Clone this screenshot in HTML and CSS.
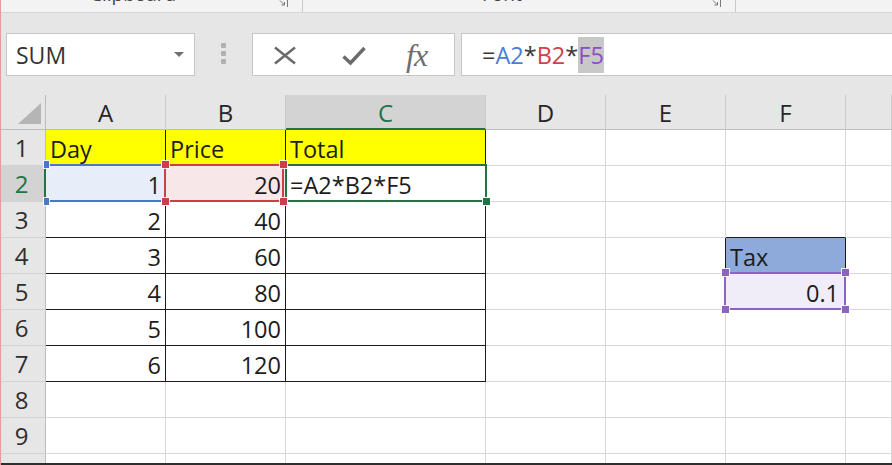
FILE: index.html
```html
<!DOCTYPE html>
<html>
<head>
<meta charset="utf-8">
<title>Sheet</title>
<link rel="stylesheet" href="styles.css">
</head>
<body>
<div class="app">
  <div class="ribbon">
    <div class="rgroup g1">
      <span class="rlabel">Clipboard</span>
      <svg class="launch" width="10" height="8" viewBox="0 0 10 8"><path d="M1 0.5 L5.5 5 M5.5 2 V5 H2.5 M8.5 0 V7" fill="none" stroke="#7a7a7a" stroke-width="1"/></svg>
    </div>
    <div class="rgroup g2">
      <span class="rlabel">Font</span>
      <svg class="launch" width="10" height="8" viewBox="0 0 10 8"><path d="M1 0.5 L5.5 5 M5.5 2 V5 H2.5 M8.5 0 V7" fill="none" stroke="#7a7a7a" stroke-width="1"/></svg>
    </div>
  </div>

  <div class="fbar">
    <div class="namebox">
      <span class="nb-text">SUM</span>
      <span class="nb-caret"></span>
    </div>
    <div class="grip"><i></i><i></i><i></i></div>
    <div class="fbtns">
      <svg class="ic-x" width="24" height="19" viewBox="0 0 24 19"><path d="M2 1.5 L22 17.5 M22 1.5 L2 17.5" stroke="#6b6b6b" stroke-width="2.6" fill="none"/></svg>
      <svg class="ic-ok" width="24" height="20" viewBox="0 0 24 20"><path d="M1.5 10.5 L8.5 17 L22.5 2" stroke="#6b6b6b" stroke-width="3.4" fill="none"/></svg>
      <span class="ic-fx">fx</span>
    </div>
    <div class="formula"><span class="f-op">=</span><span class="r-a">A2</span><span class="f-op">*</span><span class="r-b">B2</span><span class="f-op">*</span><span class="r-f">F5</span></div>
  </div>

  <div class="sheet">
    <!-- header row -->
    <div class="corner"><svg width="44" height="34" viewBox="0 0 44 34"><polygon points="40,8 40,29 17,29" fill="#b5b5b5"/></svg></div>
    <div class="ch">A</div>
    <div class="ch">B</div>
    <div class="ch ch-sel">C</div>
    <div class="ch">D</div>
    <div class="ch">E</div>
    <div class="ch">F</div>
    <div class="ch"></div>

    <!-- row 1 -->
    <div class="rh">1</div>
    <div class="cell tb yel">Day</div>
    <div class="cell tb yel">Price</div>
    <div class="cell tb yel">Total</div>
    <div class="cell"></div>
    <div class="cell"></div>
    <div class="cell"></div>
    <div class="cell"></div>

    <!-- row 2 -->
    <div class="rh rh-sel">2</div>
    <div class="cell tb num a2">1<span class="selbox blue"><i class="hd tl"></i><i class="hd bl"></i></span></div>
    <div class="cell tb num b2">20<span class="selbox red"><i class="hd tl"></i><i class="hd tr"></i><i class="hd bl"></i><i class="hd br"></i></span></div>
    <div class="cell tb">=A2*B2*F5<span class="selbox green"><i class="fill"></i></span></div>
    <div class="cell"></div>
    <div class="cell"></div>
    <div class="cell"></div>
    <div class="cell"></div>

    <!-- row 3 -->
    <div class="rh">3</div>
    <div class="cell tb num">2</div>
    <div class="cell tb num">40</div>
    <div class="cell tb"></div>
    <div class="cell"></div>
    <div class="cell"></div>
    <div class="cell bb"></div>
    <div class="cell"></div>

    <!-- row 4 -->
    <div class="rh">4</div>
    <div class="cell tb num">3</div>
    <div class="cell tb num">60</div>
    <div class="cell tb"></div>
    <div class="cell"></div>
    <div class="cell br"></div>
    <div class="cell tb tax">Tax</div>
    <div class="cell"></div>

    <!-- row 5 -->
    <div class="rh">5</div>
    <div class="cell tb num">4</div>
    <div class="cell tb num">80</div>
    <div class="cell tb"></div>
    <div class="cell"></div>
    <div class="cell"></div>
    <div class="cell num f5">0.1<span class="selbox purple"><i class="hd tl"></i><i class="hd tr"></i><i class="hd bl"></i><i class="hd br"></i></span></div>
    <div class="cell"></div>

    <!-- row 6 -->
    <div class="rh">6</div>
    <div class="cell tb num">5</div>
    <div class="cell tb num">100</div>
    <div class="cell tb"></div>
    <div class="cell"></div>
    <div class="cell"></div>
    <div class="cell"></div>
    <div class="cell"></div>

    <!-- row 7 -->
    <div class="rh">7</div>
    <div class="cell tb num">6</div>
    <div class="cell tb num">120</div>
    <div class="cell tb"></div>
    <div class="cell"></div>
    <div class="cell"></div>
    <div class="cell"></div>
    <div class="cell"></div>

    <!-- row 8 -->
    <div class="rh">8</div>
    <div class="cell"></div>
    <div class="cell"></div>
    <div class="cell"></div>
    <div class="cell"></div>
    <div class="cell"></div>
    <div class="cell"></div>
    <div class="cell"></div>

    <!-- row 9 -->
    <div class="rh">9</div>
    <div class="cell"></div>
    <div class="cell"></div>
    <div class="cell"></div>
    <div class="cell"></div>
    <div class="cell"></div>
    <div class="cell"></div>
    <div class="cell"></div>

    <!-- row 10 (cut off) -->
    <div class="rh"></div>
    <div class="cell"></div>
    <div class="cell"></div>
    <div class="cell"></div>
    <div class="cell"></div>
    <div class="cell"></div>
    <div class="cell"></div>
    <div class="cell"></div>
  </div>
</div>
</body>
</html>
```

FILE: styles.css
```css
* { box-sizing: border-box; }

html, body {
  margin: 0;
  padding: 0;
}

body {
  width: 892px;
  height: 465px;
  overflow: hidden;
  background: #ffffff;
  font-family: "Open Sans", "Liberation Sans", sans-serif;
  color: #1f1f1f;
}

.app {
  width: 892px;
  height: 465px;
  border-left: 1px solid #e69a9a;
  display: flex;
  flex-direction: column;
  overflow: hidden;
}

/* ---------- ribbon strip (cut off) ---------- */
.ribbon {
  height: 13px;
  flex: none;
  background: #f3f3f3;
  border-bottom: 1px solid #d6d6d6;
  display: flex;
  overflow: hidden;
}

.rgroup {
  height: 12px;
  display: flex;
  align-items: flex-start;
  border-right: 1px solid #c9c9c9;
}

.g1 { width: 302px; padding-left: 89px; }
.g2 { width: 433px; padding-left: 179px; }

.rlabel {
  font-size: 19px;
  line-height: 20px;
  margin-top: -16px;
  color: #444;
  white-space: nowrap;
}

.launch {
  margin-left: auto;
  margin-right: 13px;
  display: block;
}

/* ---------- formula bar ---------- */
.fbar {
  height: 82px;
  flex: none;
  background: #e6e6e6;
  padding-top: 20px;
  display: flex;
  align-items: flex-start;
}

.namebox {
  margin-left: 5px;
  width: 189px;
  height: 43px;
  background: #fff;
  border: 1px solid #c6c6c6;
  display: flex;
  align-items: center;
  padding-left: 9px;
  padding-right: 10px;
}

.nb-text {
  font-size: 23px;
  line-height: 36px;
  color: #333;
}

.nb-caret {
  margin-left: auto;
  width: 0;
  height: 0;
  border-left: 5px solid transparent;
  border-right: 5px solid transparent;
  border-top: 5px solid #707070;
}

.grip {
  width: 57px;
  height: 43px;
  display: flex;
  flex-direction: column;
  align-items: center;
  padding-top: 10px;
  gap: 3px;
}

.grip i {
  display: block;
  width: 5px;
  height: 5px;
  border-radius: 1px;
  background: #b0b0b0;
}

.fbtns {
  width: 203px;
  height: 43px;
  background: #fff;
  border: 1px solid #c6c6c6;
  display: flex;
  align-items: center;
  padding-left: 20px;
}

.ic-x { display: block; margin-top: 1px; }
.ic-ok { display: block; margin-left: 45px; margin-top: 3px; }

.ic-fx {
  margin-left: 40px;
  font-family: "Liberation Serif", "DejaVu Serif", serif;
  font-style: italic;
  font-size: 32px;
  line-height: 36px;
  color: #6e6e6e;
  letter-spacing: -1px;
}

.formula {
  flex: 1;
  margin-left: 6px;
  margin-right: -3px;
  height: 43px;
  background: #fff;
  border: 1px solid #c6c6c6;
  display: flex;
  align-items: center;
  padding-left: 20px;
  font-size: 23.5px;
  line-height: 36px;
  white-space: nowrap;
}

.f-op { color: #3a3a3a; }
.r-a { color: #4a7dd6; }
.r-b { color: #d2404b; }
.r-f {
  color: #8a4fc2;
  background: #c8c8c8;
  display: inline-block;
  line-height: 36px;
}

/* ---------- grid ---------- */
.sheet {
  height: 370px;
  flex: none;
  display: grid;
  grid-template-columns: 45px 120px 120px 200px 120px 120px 120px 1fr;
  grid-template-rows: 35px repeat(10, 36px);
  overflow: hidden;
  border-bottom: 2px solid #2e2e2e;
  background: #fff;
}

.corner {
  background: #e6e6e6;
  border-right: 1px solid #bdbdbd;
  border-bottom: 1px solid #bdbdbd;
}

.corner svg { display: block; }

.ch {
  background: #e6e6e6;
  border-right: 1px solid #cacaca;
  border-bottom: 1px solid #bdbdbd;
  display: flex;
  align-items: flex-end;
  justify-content: center;
  padding-bottom: 3px;
  font-size: 24px;
  line-height: 26px;
  color: #262626;
}

.ch-sel {
  background: #d3d3d3;
  color: #217346;
  border-bottom: 2px solid #217346;
  padding-bottom: 2px;
}

.rh {
  background: #e6e6e6;
  border-right: 1px solid #bdbdbd;
  border-bottom: 1px solid #d2d2d2;
  display: flex;
  align-items: flex-end;
  justify-content: center;
  padding-bottom: 4px;
  padding-right: 3px;
  font-size: 24px;
  line-height: 26px;
  color: #2e2e2e;
}

.rh-sel {
  background: #d3d3d3;
  color: #217346;
  border-right: 2px solid #217346;
  padding-right: 2px;
}

.cell {
  position: relative;
  border-right: 1px solid #d8d8d8;
  border-bottom: 1px solid #d8d8d8;
  display: flex;
  align-items: flex-end;
  padding: 0 4px 3px 4px;
  font-size: 23.5px;
  line-height: 26px;
  color: #1c1c1c;
  white-space: nowrap;
}

.num { justify-content: flex-end; }

.tb { border-right-color: #1b1b1b; border-bottom-color: #1b1b1b; }
.bb { border-bottom-color: #1b1b1b; }
.br { border-right-color: #1b1b1b; }

.yel { background: #ffff00; }
.tax { background: #8eaadb; padding-left: 4px; }

.a2 { background: #e7eef9; }
.b2 { background: #f8e7e8; }
.f5 { background: #f1edf8; padding-right: 6px; }

/* ---------- range selection overlays ---------- */
.selbox {
  position: absolute;
  z-index: 3;
  border: 2px solid;
  pointer-events: none;
}

.selbox.blue {
  left: 0;
  right: -1px;
  top: -2px;
  bottom: -1px;
  border-color: #4a78c9;
  border-left: none;
  z-index: 2;
}

.selbox.red {
  left: -2px;
  right: 1px;
  top: -2px;
  bottom: -1px;
  border-color: #cc3f49;
  z-index: 4;
}

.selbox.green {
  left: -1px;
  right: -2px;
  top: -2px;
  bottom: -1px;
  border-color: #217346;
  z-index: 3;
}

.selbox.purple {
  left: -2px;
  right: -1px;
  top: -2px;
  bottom: -1px;
  border-color: #8c62c4;
}

.hd {
  position: absolute;
  width: 7px;
  height: 7px;
  outline: 1px solid rgba(255, 255, 255, 0.85);
}

.blue .hd { background: #4a78c9; width: 5px; }
.red .hd { background: #cc3f49; }
.purple .hd { background: #8c62c4; }

.hd.tl { left: -4px; top: -5px; }
.hd.tr { right: -5px; top: -5px; }
.hd.bl { left: -4px; bottom: -5px; }
.hd.br { right: -5px; bottom: -5px; }

.blue .hd.tl, .blue .hd.bl { left: -2px; }

.fill {
  position: absolute;
  right: -5px;
  bottom: -5px;
  width: 7px;
  height: 7px;
  background: #217346;
  outline: 1px solid #fff;
}
```
